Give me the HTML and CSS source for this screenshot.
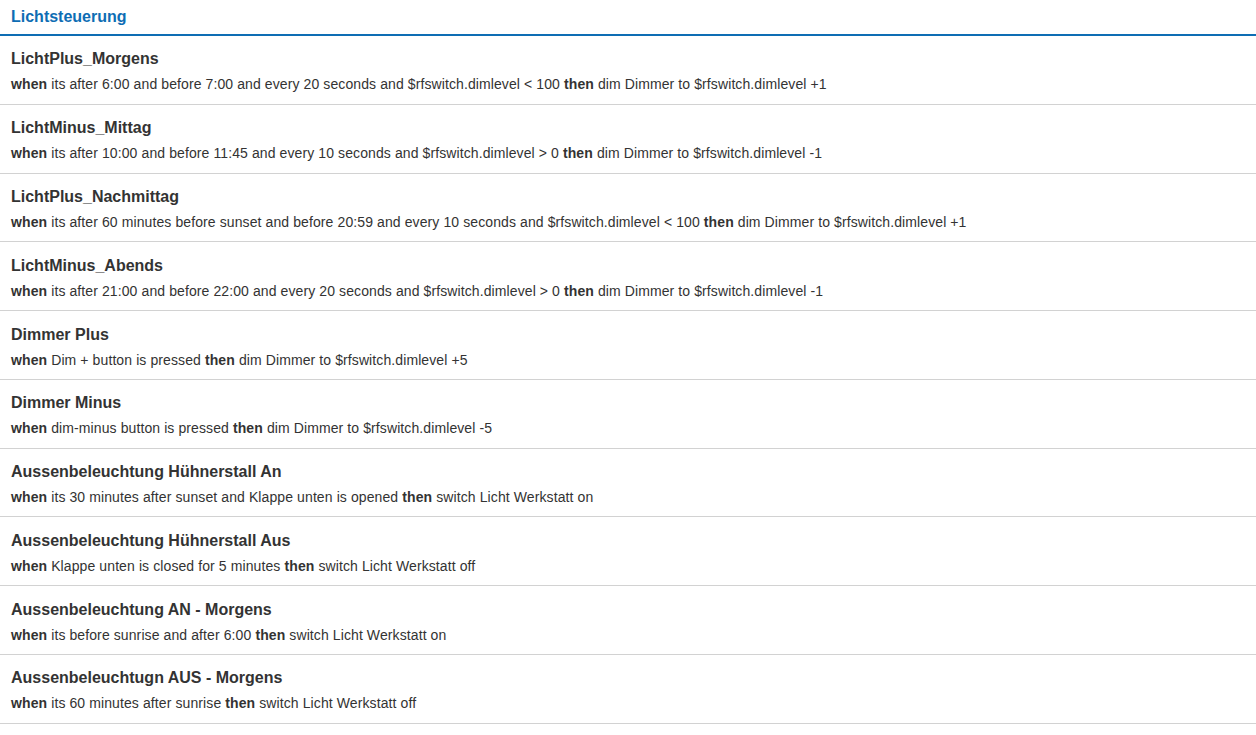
FILE: index.html
```html
<!DOCTYPE html>
<html>
<head>
<meta charset="utf-8">
<link rel="stylesheet" href="styles.css">
</head>
<body>
<div class="panel">
  <div class="header">Lichtsteuerung</div>
  <ul class="rules">
    <li class="rule"><div class="title">LichtPlus_Morgens</div><div class="desc"><b>when</b> its after 6:00 and before 7:00 and every 20 seconds and $rfswitch.dimlevel &lt; 100 <b>then</b> dim Dimmer to $rfswitch.dimlevel +1</div></li>
    <li class="rule"><div class="title">LichtMinus_Mittag</div><div class="desc"><b>when</b> its after 10:00 and before 11:45 and every 10 seconds and $rfswitch.dimlevel &gt; 0 <b>then</b> dim Dimmer to $rfswitch.dimlevel -1</div></li>
    <li class="rule"><div class="title">LichtPlus_Nachmittag</div><div class="desc"><b>when</b> its after 60 minutes before sunset and before 20:59 and every 10 seconds and $rfswitch.dimlevel &lt; 100 <b>then</b> dim Dimmer to $rfswitch.dimlevel +1</div></li>
    <li class="rule"><div class="title">LichtMinus_Abends</div><div class="desc"><b>when</b> its after 21:00 and before 22:00 and every 20 seconds and $rfswitch.dimlevel &gt; 0 <b>then</b> dim Dimmer to $rfswitch.dimlevel -1</div></li>
    <li class="rule"><div class="title">Dimmer Plus</div><div class="desc"><b>when</b> Dim + button is pressed <b>then</b> dim Dimmer to $rfswitch.dimlevel +5</div></li>
    <li class="rule"><div class="title">Dimmer Minus</div><div class="desc"><b>when</b> dim-minus button is pressed <b>then</b> dim Dimmer to $rfswitch.dimlevel -5</div></li>
    <li class="rule"><div class="title">Aussenbeleuchtung Hühnerstall An</div><div class="desc"><b>when</b> its 30 minutes after sunset and Klappe unten is opened <b>then</b> switch Licht Werkstatt on</div></li>
    <li class="rule"><div class="title">Aussenbeleuchtung Hühnerstall Aus</div><div class="desc"><b>when</b> Klappe unten is closed for 5 minutes <b>then</b> switch Licht Werkstatt off</div></li>
    <li class="rule"><div class="title">Aussenbeleuchtung AN - Morgens</div><div class="desc"><b>when</b> its before sunrise and after 6:00 <b>then</b> switch Licht Werkstatt on</div></li>
    <li class="rule"><div class="title">Aussenbeleuchtugn AUS - Morgens</div><div class="desc"><b>when</b> its 60 minutes after sunrise <b>then</b> switch Licht Werkstatt off</div></li>
  </ul>
</div>
</body>
</html>
```
FILE: styles.css
```css
html, body {
  margin: 0;
  padding: 0;
  background: #ffffff;
}
body {
  font-family: "Liberation Sans", Arial, sans-serif;
  color: #333333;
}
.header {
  box-sizing: border-box;
  height: 36px;
  padding: 8px 11px 0 11px;
  font-size: 16px;
  line-height: 18px;
  font-weight: bold;
  color: #0e6db4;
  border-bottom: 2px solid #0e6db4;
}
.rules {
  list-style: none;
  margin: 0;
  padding: 0;
}
.rule {
  padding: 13.4px 11px 10.4px 11px;
  border-bottom: 1px solid #d2d2d2;
}
.title {
  font-size: 16px;
  line-height: 20px;
  font-weight: bold;
  color: #333333;
}
.desc {
  margin-top: 6px;
  font-size: 14px;
  line-height: 18px;
  letter-spacing: 0.1px;
  color: #333333;
}
.desc b {
  font-weight: bold;
}
```
